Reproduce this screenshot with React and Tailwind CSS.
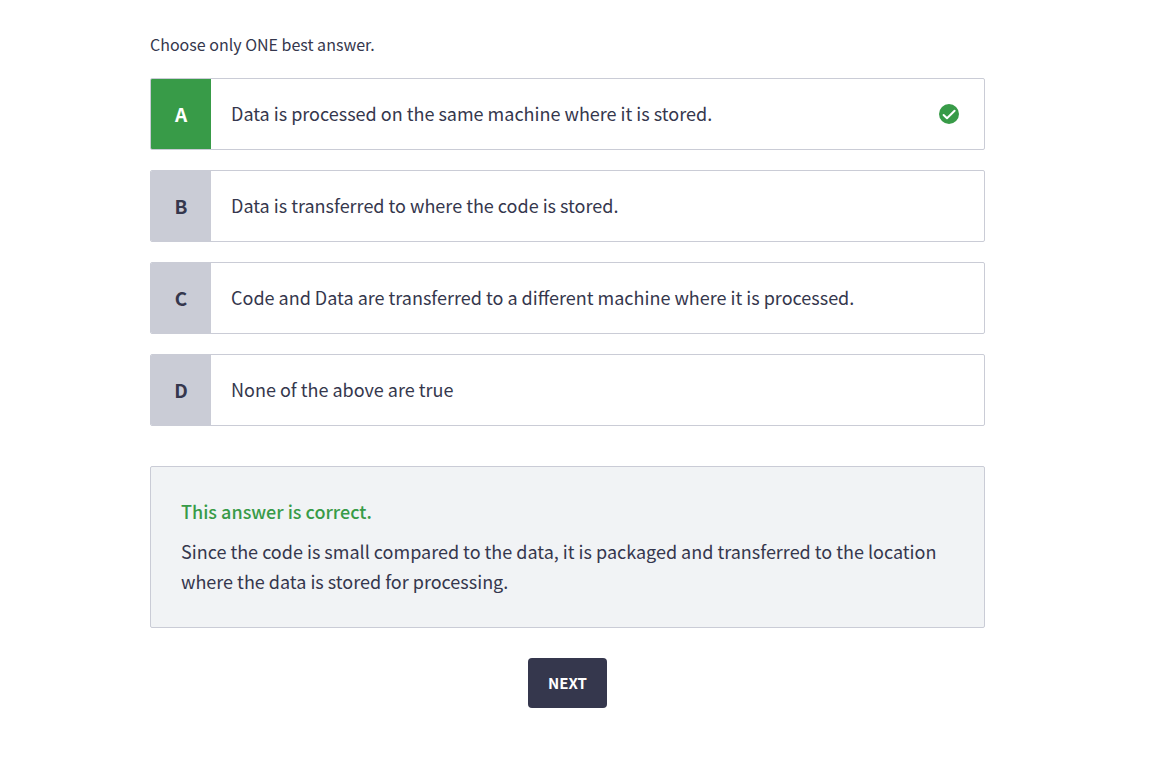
import React from "react";

const choices = [
  { letter: "A", text: "Data is processed on the same machine where it is stored.", correct: true },
  { letter: "B", text: "Data is transferred to where the code is stored." },
  { letter: "C", text: "Code and Data are transferred to a different machine where it is processed." },
  { letter: "D", text: "None of the above are true" },
];

function CheckBadge() {
  return (
    <svg viewBox="0 0 20 20" className="size-5 shrink-0" role="img" aria-label="Correct">
      <circle cx="10" cy="10" r="10" fill="#389b48" />
      <path
        d="M4.6 11L8 14.3L15.6 6.7"
        fill="none"
        stroke="#fff"
        strokeWidth="2"
        strokeLinecap="round"
        strokeLinejoin="round"
      />
    </svg>
  );
}

function Choice({ letter, text, correct }) {
  return (
    <button
      type="button"
      className="flex min-h-18 w-full items-stretch overflow-hidden rounded-xs border border-[#caccd6] bg-white text-left"
    >
      <span
        className={`flex w-15 shrink-0 items-center justify-center text-[19px] font-bold ${
          correct ? "bg-[#389b48] text-white" : "bg-[#caccd6] text-[#35374d]"
        }`}
      >
        {letter}
      </span>
      <span className="flex-1 self-center px-5 pb-0.5">{text}</span>
      {correct && (
        <span className="flex items-center pr-[25px]">
          <CheckBadge />
        </span>
      )}
    </button>
  );
}

export default function App() {
  return (
    <main className="pt-[29px] pr-[165px] pb-10 pl-[150px] font-['Noto_Sans_CJK_SC','Noto_Sans',sans-serif] text-[18px] leading-[30px] text-[#35374d]">
      <p className="text-[16px]">Choose only ONE best answer.</p>
      <div className="mt-[19px] flex flex-col gap-5">
        {choices.map((choice) => (
          <Choice key={choice.letter} {...choice} />
        ))}
      </div>
      <section className="mt-10 rounded-xs border border-[#caccd6] bg-[#f1f3f5] px-[30px] pt-[29px] pb-[31px]">
        <h2 className="font-medium text-[#389b48]">This answer is correct.</h2>
        <p className="mt-[10px]">
          Since the code is small compared to the data, it is packaged and transferred to the location where the data
          is stored for processing.
        </p>
      </section>
      <div className="mt-[30px] flex justify-center">
        <button type="button" className="h-[50px] rounded-sm bg-[#35374d] px-5 text-[15px] font-bold text-white">
          NEXT
        </button>
      </div>
    </main>
  );
}
